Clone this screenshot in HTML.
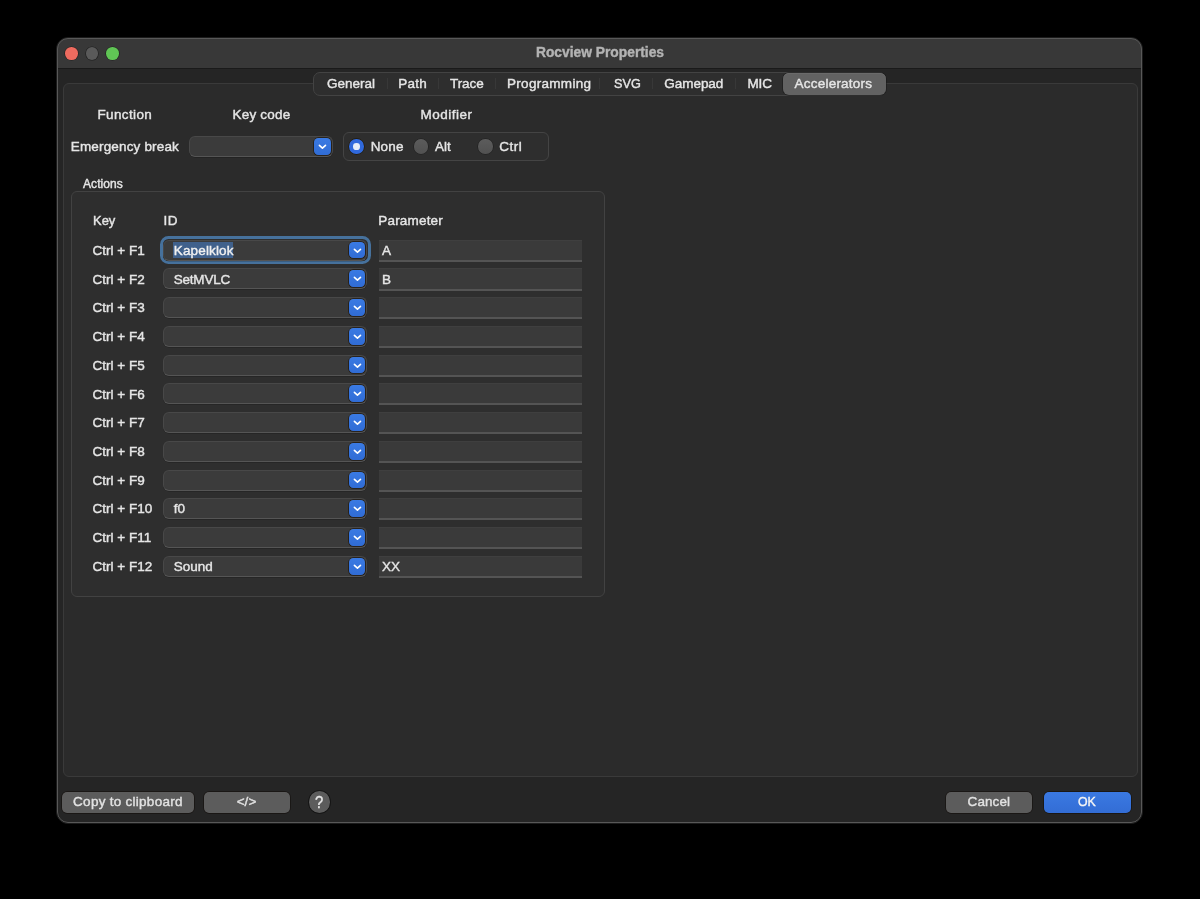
<!DOCTYPE html>
<html><head><meta charset="utf-8">
<style>
*{box-sizing:border-box;margin:0;padding:0}
body{will-change:transform;}
html,body{width:1200px;height:899px;background:#000;overflow:hidden;font-family:"Liberation Sans",sans-serif;font-size:13.5px;color:#e6e6e6}
.a{position:absolute;white-space:nowrap;-webkit-font-smoothing:antialiased;-webkit-text-stroke:0.4px currentColor}
#win{position:absolute;left:55.5px;top:36.6px;width:1087.9px;height:787.6px;border-radius:12px;background:#252525;border:1.3px solid #1b1b1b;overflow:hidden}
#win:after{content:"";position:absolute;left:0;top:0;right:0;bottom:0;border-radius:11px;border:1.8px solid #585858;pointer-events:none}
#title{position:absolute;left:0;top:0;width:100%;height:31px;background:#383838;border-bottom:1.3px solid #1a1a1a}
.tl{position:absolute;top:9.5px;width:12.6px;height:12.6px;border-radius:50%;box-shadow:0 0 0 0.6px rgba(0,0,0,.45)}
#tabbox{position:absolute;left:63px;top:83px;width:1074.5px;height:693.5px;background:#2b2b2b;border:1px solid #3a3a3a;border-radius:6px}
#seg{position:absolute;left:313px;top:72px;width:573px;height:23.5px;background:#2e2e2e;border:1px solid #434343;border-radius:7px}
#selt{position:absolute;left:783px;top:73.4px;width:102.7px;height:21.2px;background:#626262;border-radius:6px;box-shadow:inset 0 0.8px 0 #6e6e6e,0 0 0 0.7px rgba(20,20,20,.6)}
.sep{width:1px;height:11px;background:#383838}
.combo{position:absolute;background:#3b3b3b;border:1px solid #484848;border-bottom-color:#555;border-radius:6px;box-shadow:0 0.5px 0.5px rgba(0,0,0,.35)}
.combo .btn{position:absolute;right:1px;width:16.9px;height:16.9px;border-radius:4.5px;background:linear-gradient(#3a7ae3,#306cd5);box-shadow:0 0 0 0.8px rgba(25,18,8,.75)}
.combo .btn svg{position:absolute;left:0;top:0}
.ring{position:absolute;border:3.8px solid #46719c;border-radius:8.5px}
.sel{background:#40618c}
.field{background:#3a3a3a;border-top:1px solid #3f3f3f;border-bottom:2px solid #545454}
.group{background:#2e2e2e;border:1px solid #424242;border-radius:6px}
.rgroup{background:#2e2e2e;border:1px solid #444;border-radius:6px}
.radio{width:14.5px;height:14.5px;border-radius:50%;background:linear-gradient(#5c5c5c,#515151);box-shadow:0 0 0 0.6px rgba(20,20,20,.6)}
.radio.on{background:#3069dc;box-shadow:0 0 0 0.7px rgba(30,20,0,.8)}
.radio.on:after{content:"";position:absolute;left:3.9px;top:3.9px;width:6.7px;height:6.7px;border-radius:50%;background:#e6edf8}
.pbtn{background:#5c5c5c;border-radius:5px;box-shadow:0 0 0 0.7px rgba(12,6,2,.55)}
.pbtn.ok{background:linear-gradient(#3a79e2,#336dd5)}
.help{background:#5c5c5c;border-radius:50%;box-shadow:0 0 0 0.8px rgba(10,10,10,.7)}
</style></head><body>
<div id="win">
  <div id="title">
    <div class="tl" style="left:8.6px;background:#ee6b5f"></div>
    <div class="tl" style="left:29px;background:#5a5a5a"></div>
    <div class="tl" style="left:49.7px;background:#60c555"></div>
  </div>
</div>
<div id="tabbox"></div>
<div id="seg"></div>
<div id="selt"></div>
<div class="a" style="left:0;top:45.32px;width:1200px;text-align:center;font-size:13.8px;line-height:16px;font-weight:bold;color:#b3b3b3">Rocview Properties</div>
<div class="a" style="left:327.00px;top:75.57px;font-size:13.5px;line-height:16px;letter-spacing:0.0px;color:#e6e6e6">General</div>
<div class="a" style="left:398.30px;top:75.57px;font-size:13.5px;line-height:16px;letter-spacing:0.25px;color:#e6e6e6">Path</div>
<div class="a" style="left:450.00px;top:75.57px;font-size:13.5px;line-height:16px;letter-spacing:-0.062px;color:#e6e6e6">Trace</div>
<div class="a" style="left:507.00px;top:75.57px;font-size:13.5px;line-height:16px;letter-spacing:0.3px;color:#e6e6e6">Programming</div>
<div class="a" style="left:613.80px;top:75.57px;font-size:13.5px;line-height:16px;transform:scaleX(0.9375);transform-origin:0 0;color:#e6e6e6">SVG</div>
<div class="a" style="left:664.30px;top:75.57px;font-size:13.5px;line-height:16px;letter-spacing:-0.042px;color:#e6e6e6">Gamepad</div>
<div class="a" style="left:747.50px;top:75.57px;font-size:13.5px;line-height:16px;letter-spacing:-0.125px;color:#e6e6e6">MIC</div>
<div class="a" style="left:794.50px;top:75.57px;font-size:13.5px;line-height:16px;letter-spacing:0.227px;color:#e6e6e6">Accelerators</div>
<div class="a sep" style="left:386.5px;top:78.3px"></div>
<div class="a sep" style="left:437.5px;top:78.3px"></div>
<div class="a sep" style="left:495px;top:78.3px"></div>
<div class="a sep" style="left:598.5px;top:78.3px"></div>
<div class="a sep" style="left:652px;top:78.3px"></div>
<div class="a sep" style="left:735.3px;top:78.3px"></div>
<div class="a" style="left:97.50px;top:106.82px;font-size:13.5px;line-height:16px;letter-spacing:0.357px;">Function</div>
<div class="a" style="left:232.50px;top:106.82px;font-size:13.5px;line-height:16px;letter-spacing:0.214px;">Key code</div>
<div class="a" style="left:420.50px;top:106.82px;font-size:13.5px;line-height:16px;letter-spacing:0.5px;">Modifier</div>
<div class="a" style="left:70.75px;top:139.32px;font-size:13.5px;line-height:16px;letter-spacing:0.161px;">Emergency break</div>
<div class="combo" style="left:189px;top:136.00px;width:144px;height:21px"><div class="btn" style="top:1.00px"><svg width="17" height="17" viewBox="0 0 17 17"><path d="M5.4 7.3 L8.45 10.2 L11.5 7.3" fill="none" stroke="#fff" stroke-width="1.6" stroke-linecap="round" stroke-linejoin="round"/></svg></div></div>
<div class="a rgroup" style="left:342.8px;top:131.9px;width:206.2px;height:29px"></div>
<div class="a radio on" style="left:349.3px;top:139.2px"></div>
<div class="a radio" style="left:413.8px;top:139.2px"></div>
<div class="a radio" style="left:478.2px;top:139.2px"></div>
<div class="a" style="left:370.70px;top:139.32px;font-size:13.5px;line-height:16px;letter-spacing:0.167px;">None</div>
<div class="a" style="left:435.00px;top:139.32px;font-size:13.5px;line-height:16px;">Alt</div>
<div class="a" style="left:499.25px;top:139.32px;font-size:13.5px;line-height:16px;letter-spacing:0.5px;">Ctrl</div>
<div class="a" style="left:83.00px;top:175.84px;font-size:12px;line-height:16px;letter-spacing:0.083px;">Actions</div>
<div class="a group" style="left:70.6px;top:190.6px;width:534px;height:406px"></div>
<div class="a" style="left:92.70px;top:213.32px;font-size:13.5px;line-height:16px;transform:scaleX(0.9608695652173914);transform-origin:0 0;">Key</div>
<div class="a" style="left:163.60px;top:213.32px;font-size:13.5px;line-height:16px;letter-spacing:0.3px;">ID</div>
<div class="a" style="left:378.25px;top:213.32px;font-size:13.5px;line-height:16px;letter-spacing:0.188px;">Parameter</div>
<div class="a" style="left:92.60px;top:242.82px;font-size:13.5px;line-height:16px;">Ctrl + F1</div>
<div class="ring" style="left:159.9px;top:236.40px;width:211.4px;height:27.6px"></div>
<div class="combo" style="left:162.9px;top:239.60px;width:204.6px;height:21px"><div class="btn" style="top:1.00px"><svg width="17" height="17" viewBox="0 0 17 17"><path d="M5.4 7.3 L8.45 10.2 L11.5 7.3" fill="none" stroke="#fff" stroke-width="1.6" stroke-linecap="round" stroke-linejoin="round"/></svg></div></div>
<div class="a sel" style="left:173.2px;top:242.1px;width:60px;height:15.8px"></div>
<div class="a" style="left:173.75px;top:242.82px;font-size:13.5px;line-height:16px;letter-spacing:0.15px;color:#f0f0f0">Kapelklok</div>
<div class="a field" style="left:378.9px;top:239.60px;width:203.5px;height:22.2px"></div>
<div class="a" style="left:382.00px;top:242.82px;font-size:13.5px;line-height:16px;">A</div>
<div class="a" style="left:92.60px;top:271.56px;font-size:13.5px;line-height:16px;">Ctrl + F2</div>
<div class="combo" style="left:162.9px;top:268.34px;width:204.6px;height:21px"><div class="btn" style="top:1.00px"><svg width="17" height="17" viewBox="0 0 17 17"><path d="M5.4 7.3 L8.45 10.2 L11.5 7.3" fill="none" stroke="#fff" stroke-width="1.6" stroke-linecap="round" stroke-linejoin="round"/></svg></div></div>
<div class="a" style="left:173.75px;top:271.56px;font-size:13.5px;line-height:16px;letter-spacing:-0.217px;">SetMVLC</div>
<div class="a field" style="left:378.9px;top:268.34px;width:203.5px;height:22.2px"></div>
<div class="a" style="left:382.00px;top:271.56px;font-size:13.5px;line-height:16px;">B</div>
<div class="a" style="left:92.60px;top:300.30px;font-size:13.5px;line-height:16px;">Ctrl + F3</div>
<div class="combo" style="left:162.9px;top:297.08px;width:204.6px;height:21px"><div class="btn" style="top:1.00px"><svg width="17" height="17" viewBox="0 0 17 17"><path d="M5.4 7.3 L8.45 10.2 L11.5 7.3" fill="none" stroke="#fff" stroke-width="1.6" stroke-linecap="round" stroke-linejoin="round"/></svg></div></div>
<div class="a field" style="left:378.9px;top:297.08px;width:203.5px;height:22.2px"></div>
<div class="a" style="left:92.60px;top:329.04px;font-size:13.5px;line-height:16px;">Ctrl + F4</div>
<div class="combo" style="left:162.9px;top:325.82px;width:204.6px;height:21px"><div class="btn" style="top:1.00px"><svg width="17" height="17" viewBox="0 0 17 17"><path d="M5.4 7.3 L8.45 10.2 L11.5 7.3" fill="none" stroke="#fff" stroke-width="1.6" stroke-linecap="round" stroke-linejoin="round"/></svg></div></div>
<div class="a field" style="left:378.9px;top:325.82px;width:203.5px;height:22.2px"></div>
<div class="a" style="left:92.60px;top:357.78px;font-size:13.5px;line-height:16px;">Ctrl + F5</div>
<div class="combo" style="left:162.9px;top:354.56px;width:204.6px;height:21px"><div class="btn" style="top:1.00px"><svg width="17" height="17" viewBox="0 0 17 17"><path d="M5.4 7.3 L8.45 10.2 L11.5 7.3" fill="none" stroke="#fff" stroke-width="1.6" stroke-linecap="round" stroke-linejoin="round"/></svg></div></div>
<div class="a field" style="left:378.9px;top:354.56px;width:203.5px;height:22.2px"></div>
<div class="a" style="left:92.60px;top:386.52px;font-size:13.5px;line-height:16px;">Ctrl + F6</div>
<div class="combo" style="left:162.9px;top:383.30px;width:204.6px;height:21px"><div class="btn" style="top:1.00px"><svg width="17" height="17" viewBox="0 0 17 17"><path d="M5.4 7.3 L8.45 10.2 L11.5 7.3" fill="none" stroke="#fff" stroke-width="1.6" stroke-linecap="round" stroke-linejoin="round"/></svg></div></div>
<div class="a field" style="left:378.9px;top:383.30px;width:203.5px;height:22.2px"></div>
<div class="a" style="left:92.60px;top:415.26px;font-size:13.5px;line-height:16px;">Ctrl + F7</div>
<div class="combo" style="left:162.9px;top:412.04px;width:204.6px;height:21px"><div class="btn" style="top:1.00px"><svg width="17" height="17" viewBox="0 0 17 17"><path d="M5.4 7.3 L8.45 10.2 L11.5 7.3" fill="none" stroke="#fff" stroke-width="1.6" stroke-linecap="round" stroke-linejoin="round"/></svg></div></div>
<div class="a field" style="left:378.9px;top:412.04px;width:203.5px;height:22.2px"></div>
<div class="a" style="left:92.60px;top:444.00px;font-size:13.5px;line-height:16px;">Ctrl + F8</div>
<div class="combo" style="left:162.9px;top:440.78px;width:204.6px;height:21px"><div class="btn" style="top:1.00px"><svg width="17" height="17" viewBox="0 0 17 17"><path d="M5.4 7.3 L8.45 10.2 L11.5 7.3" fill="none" stroke="#fff" stroke-width="1.6" stroke-linecap="round" stroke-linejoin="round"/></svg></div></div>
<div class="a field" style="left:378.9px;top:440.78px;width:203.5px;height:22.2px"></div>
<div class="a" style="left:92.60px;top:472.74px;font-size:13.5px;line-height:16px;">Ctrl + F9</div>
<div class="combo" style="left:162.9px;top:469.52px;width:204.6px;height:21px"><div class="btn" style="top:1.00px"><svg width="17" height="17" viewBox="0 0 17 17"><path d="M5.4 7.3 L8.45 10.2 L11.5 7.3" fill="none" stroke="#fff" stroke-width="1.6" stroke-linecap="round" stroke-linejoin="round"/></svg></div></div>
<div class="a field" style="left:378.9px;top:469.52px;width:203.5px;height:22.2px"></div>
<div class="a" style="left:92.60px;top:501.48px;font-size:13.5px;line-height:16px;">Ctrl + F10</div>
<div class="combo" style="left:162.9px;top:498.26px;width:204.6px;height:21px"><div class="btn" style="top:1.00px"><svg width="17" height="17" viewBox="0 0 17 17"><path d="M5.4 7.3 L8.45 10.2 L11.5 7.3" fill="none" stroke="#fff" stroke-width="1.6" stroke-linecap="round" stroke-linejoin="round"/></svg></div></div>
<div class="a" style="left:173.75px;top:501.48px;font-size:13.5px;line-height:16px;">f0</div>
<div class="a field" style="left:378.9px;top:498.26px;width:203.5px;height:22.2px"></div>
<div class="a" style="left:92.60px;top:530.22px;font-size:13.5px;line-height:16px;">Ctrl + F11</div>
<div class="combo" style="left:162.9px;top:527.00px;width:204.6px;height:21px"><div class="btn" style="top:1.00px"><svg width="17" height="17" viewBox="0 0 17 17"><path d="M5.4 7.3 L8.45 10.2 L11.5 7.3" fill="none" stroke="#fff" stroke-width="1.6" stroke-linecap="round" stroke-linejoin="round"/></svg></div></div>
<div class="a field" style="left:378.9px;top:527.00px;width:203.5px;height:22.2px"></div>
<div class="a" style="left:92.60px;top:558.96px;font-size:13.5px;line-height:16px;">Ctrl + F12</div>
<div class="combo" style="left:162.9px;top:555.74px;width:204.6px;height:21px"><div class="btn" style="top:1.00px"><svg width="17" height="17" viewBox="0 0 17 17"><path d="M5.4 7.3 L8.45 10.2 L11.5 7.3" fill="none" stroke="#fff" stroke-width="1.6" stroke-linecap="round" stroke-linejoin="round"/></svg></div></div>
<div class="a" style="left:173.75px;top:558.96px;font-size:13.5px;line-height:16px;">Sound</div>
<div class="a field" style="left:378.9px;top:555.74px;width:203.5px;height:22.2px"></div>
<div class="a" style="left:382.00px;top:558.96px;font-size:13.5px;line-height:16px;">XX</div>
<div class="a pbtn" style="left:62.25px;top:792px;width:131.75px;height:20.75px"></div>
<div class="a" style="left:73.10px;top:793.92px;font-size:13.5px;line-height:16px;letter-spacing:0.269px;color:#e2e2e2">Copy to clipboard</div>
<div class="a pbtn" style="left:203.6px;top:792px;width:86.3px;height:20.75px"></div>
<div class="a" style="left:236.70px;top:793.92px;font-size:13.5px;line-height:16px;letter-spacing:0.05px;color:#e2e2e2">&lt;/&gt;</div>
<div class="a help" style="left:308.7px;top:791.4px;width:21.2px;height:21.2px"></div>
<div class="a" style="left:315.30px;top:794.61px;font-size:17px;line-height:16px;transform:scaleX(0.87);transform-origin:0 0;color:#e6e6e6">?</div>
<div class="a pbtn" style="left:945.5px;top:792px;width:86.7px;height:20.9px"></div>
<div class="a" style="left:967.60px;top:793.92px;font-size:13.5px;line-height:16px;letter-spacing:0.08px;color:#e2e2e2">Cancel</div>
<div class="a pbtn ok" style="left:1044px;top:792px;width:86.8px;height:20.9px"></div>
<div class="a" style="left:1077.90px;top:794.12px;font-size:13.5px;line-height:16px;transform:scaleX(0.915);transform-origin:0 0;color:#f4f4f4">OK</div>

</body></html>
